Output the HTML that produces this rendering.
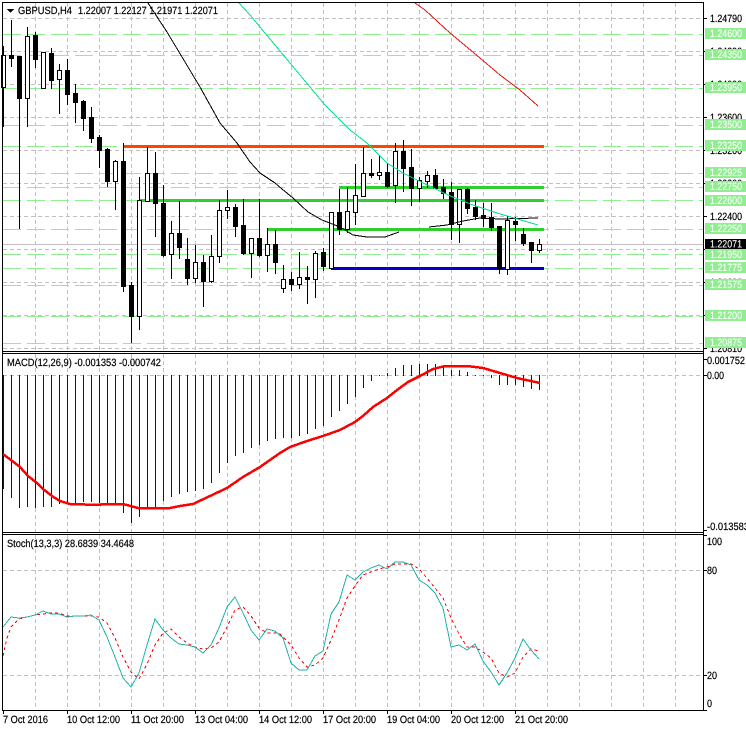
<!DOCTYPE html>
<html><head><meta charset="utf-8"><title>GBPUSD,H4</title>
<style>
html,body{margin:0;padding:0;background:#fff;width:746px;height:731px;overflow:hidden}
svg{display:block}
text{font-family:"Liberation Sans",sans-serif;font-size:10.5px;fill:#000;stroke:#000;stroke-width:.2px}
text.w{fill:#fff;stroke:#fff;stroke-width:.1px}
</style></head><body>
<svg width="746" height="731" viewBox="0 0 746 731" xmlns="http://www.w3.org/2000/svg" shape-rendering="crispEdges">
<rect width="746" height="731" fill="#fff"/>
<!-- vertical grid -->
<path fill="none" stroke="#c0c0c0" stroke-dasharray="4 3" d="M35.5 3V351M67.5 3V351M99.5 3V351M131.5 3V351M163.5 3V351M195.5 3V351M227.5 3V351M259.5 3V351M291.5 3V351M323.5 3V351M355.5 3V351M387.5 3V351M419.5 3V351M451.5 3V351M483.5 3V351M515.5 3V351M547.5 3V351M579.5 3V351M611.5 3V351M643.5 3V351M675.5 3V351M35.5 354V532M67.5 354V532M99.5 354V532M131.5 354V532M163.5 354V532M195.5 354V532M227.5 354V532M259.5 354V532M291.5 354V532M323.5 354V532M355.5 354V532M387.5 354V532M419.5 354V532M451.5 354V532M483.5 354V532M515.5 354V532M547.5 354V532M579.5 354V532M611.5 354V532M643.5 354V532M675.5 354V532M35.5 535V710M67.5 535V710M99.5 535V710M131.5 535V710M163.5 535V710M195.5 535V710M227.5 535V710M259.5 535V710M291.5 535V710M323.5 535V710M355.5 535V710M387.5 535V710M419.5 535V710M451.5 535V710M483.5 535V710M515.5 535V710M547.5 535V710M579.5 535V710M611.5 535V710M643.5 535V710M675.5 535V710"/>
<!-- horizontal grid -->
<path fill="none" stroke="#c0c0c0" stroke-dasharray="4 3" d="M3 18.5H703M3 51.5H703M3 84.5H703M3 117.5H703M3 150.5H703M3 183.5H703M3 216.5H703M3 249.5H703M3 282.5H703M3 315.5H703M3 348.5H703M3 375.5H703M3 570.5H703M3 675.5H703"/>
<!-- green dashed levels -->
<path fill="none" stroke="#90ee90" stroke-dasharray="18 6" d="M3 34.5H703M3 55.5H703M3 88.5H703M3 125.5H703M3 146.5H703M3 173.5H703M3 187.5H703M3 200.5H703M3 229.5H703M3 254.5H703M3 268.5H703M3 285.5H703M3 316.5H703M3 343.5H703"/>
<!-- current price -->
<rect x="3" y="244" width="700" height="1" fill="#c0c0c0"/>
<!-- thick levels -->
<rect x="123" y="145" width="421" height="3" fill="#ff4500"/>
<rect x="339" y="186" width="205" height="3" fill="#32cd32"/>
<rect x="139" y="199" width="405" height="3" fill="#32cd32"/>
<rect x="267" y="228" width="277" height="3" fill="#32cd32"/>
<rect x="331" y="267" width="213" height="3" fill="#0000cd"/>
<!-- wicks -->
<path fill="none" stroke="#000" d="M3.5 46V127M11.5 20V67M19.5 56V229M27.5 27V127M35.5 32V68M43.5 52V88M51.5 48V89M59.5 64V114M67.5 59V105M75.5 84V123M83.5 100V131M91.5 107V143M99.5 135V168M107.5 148V187M115.5 160V210M123.5 143V292M131.5 282V343M139.5 177V330M147.5 147V202M155.5 152V237M163.5 185V257M171.5 221V279M179.5 201V259M187.5 238V285M195.5 245V283M203.5 255V307M211.5 235V283M219.5 200V263M227.5 190V219M235.5 204V237M243.5 199V255M251.5 238V278M259.5 199V257M267.5 228V272M275.5 230V274M283.5 265V293M291.5 272V291M299.5 252V289M307.5 266V304M315.5 251V298M323.5 248V271M331.5 212V268M339.5 189V235M347.5 187V233M355.5 164V225M363.5 147V197M371.5 159V178M379.5 155V180M387.5 163V188M395.5 143V203M403.5 140V192M411.5 149V206M419.5 177V202M427.5 171V188M435.5 169V188M443.5 179V199M451.5 182V240M459.5 189V243M467.5 188V214M475.5 200V220M483.5 203V227M491.5 203V231M499.5 226V274M507.5 216V275M515.5 217V241M523.5 228V246M531.5 242V263M539.5 239V253"/>
<!-- black bodies -->
<path fill="#000" d="M9 55h5v4h-5zM17 56h5v43h-5zM33 35h5v25h-5zM49 53h5v28h-5zM65 70h5v25h-5zM73 93h5v10h-5zM81 101h5v18h-5zM89 117h5v22h-5zM97 137h5v14h-5zM105 149h5v33h-5zM121 161h5v126h-5zM129 285h5v32h-5zM153 173h5v31h-5zM161 203h5v53h-5zM177 233h5v15h-5zM185 259h5v20h-5zM201 262h5v20h-5zM233 207h5v20h-5zM241 225h5v29h-5zM257 238h5v18h-5zM273 244h5v19h-5zM289 279h5v6h-5zM305 277h5v3h-5zM321 252h5v15h-5zM337 212h5v18h-5zM369 173h5v3h-5zM385 172h5v15h-5zM401 151h5v18h-5zM409 167h5v22h-5zM433 175h5v14h-5zM441 187h5v7h-5zM449 192h5v33h-5zM465 189h5v20h-5zM473 207h5v10h-5zM481 215h5v4h-5zM489 217h5v11h-5zM497 226h5v43h-5zM513 221h5v4h-5zM521 234h5v10h-5zM529 242h5v9h-5z"/>
<!-- white bodies -->
<path fill="#fff" stroke="#000" d="M1.5 55.5h4v32h-4zM25.5 36.5h4v62h-4zM41.5 52.5h4v36h-4zM57.5 70.5h4v9h-4zM113.5 161.5h4v20h-4zM137.5 200.5h4v116h-4zM145.5 173.5h4v28h-4zM169.5 233.5h4v21h-4zM193.5 262.5h4v16h-4zM209.5 256.5h4v25h-4zM217.5 210.5h4v46h-4zM225.5 207.5h4v3h-4zM249.5 238.5h4v15h-4zM265.5 244.5h4v11h-4zM281.5 279.5h4v9h-4zM297.5 277.5h4v7h-4zM313.5 253.5h4v26h-4zM329.5 212.5h4v56h-4zM345.5 211.5h4v18h-4zM353.5 195.5h4v17h-4zM361.5 173.5h4v23h-4zM377.5 172.5h4v3h-4zM393.5 151.5h4v34h-4zM417.5 180.5h4v8h-4zM425.5 175.5h4v6h-4zM457.5 189.5h4v35h-4zM505.5 220.5h4v49h-4zM537.5 244.5h4v6h-4z"/>
<!-- moving averages -->
<polyline fill="none" stroke="#000" points="148,3 167,32 182,57 200,87 220,123 237,143 250,162 260,173 275,183 282,189 293,198 308,212 322,220 340,227 353,235 367,237 385,237 399,232"/>
<polyline fill="none" stroke="#000" points="429,227 447,225 463,221 480,218 500,219 538,218"/>
<polyline fill="none" stroke="#00e08a" points="239,3 250,15 275,45 300,75 325,105 350,130 367,143 387,163 403,173 423,183 448,195 473,205 497,213 538,225"/>
<polyline fill="none" stroke="#f01010" points="415,3 425,10 450,33 480,58 500,75 520,90 538,106"/>
<!-- MACD bars -->
<path fill="none" stroke="#0000cd" d="M3.5 375V489M11.5 375V498M19.5 375V508M27.5 375V507M35.5 375V508M43.5 375V507M51.5 375V507M59.5 375V504M67.5 375V503M75.5 375V503M83.5 375V502M91.5 375V502M99.5 375V503M107.5 375V503M115.5 375V503M123.5 375V513M131.5 375V523M139.5 375V517M147.5 375V508M155.5 375V507M163.5 375V501M171.5 375V497M179.5 375V494M187.5 375V492M195.5 375V491M203.5 375V489M211.5 375V483M219.5 375V473M227.5 375V463M235.5 375V456M243.5 375V453M251.5 375V448M259.5 375V445M267.5 375V441M275.5 375V439M283.5 375V438M291.5 375V438M299.5 375V436M307.5 375V434M315.5 375V429M323.5 375V426M331.5 375V417M339.5 375V411M347.5 375V404M355.5 375V397M363.5 375V388M371.5 375V381M379.5 375V376M387.5 373V376M395.5 368V376M403.5 365V376M411.5 365V376M419.5 364V376M427.5 364V376M435.5 364V376M443.5 367V376M451.5 370V376M459.5 370V376M467.5 372V376M475.5 375V376M483.5 375V376M491.5 375V378M499.5 375V385M507.5 375V385M515.5 375V385M523.5 375V387M531.5 375V389M539.5 375V390"/>
<polyline fill="none" stroke="#ff0000" stroke-width="2.5" points="3,454 11,460 20,467 28,476 37,483 43,489 52,496 60,501 70,504 100,505 102,504 123,504 138,508 170,508 180,506 193,504 210,496 227,488 243,477 260,467 280,453 290,447 307,441 323,436 340,430 355,422 363,416 373,407 387,398 397,390 408,382 420,376 433,369 445,366 467,366 483,368 500,373 517,378 540,383"/>
<!-- Stochastic -->
<polyline fill="none" stroke="#ff0000" stroke-dasharray="3 3" points="3,656 7,638 11,627 19,619 27,617 35,615 43,614 51,613 59,613 67,616 75,616 83,616 91,616 99,617 107,623 115,638 123,657 131,672 139,679 147,664 155,645 163,633 171,629 179,637 187,643 195,647 203,649 211,648 219,642 227,627 235,610 243,607 251,616 259,628 267,633 275,633 280,634 291,645 299,658 307,667 315,665 323,658 331,640 339,620 347,598 355,586 363,575 371,572 379,569 387,567 395,564 403,564 411,564 419,569 427,578 435,588 443,598 451,618 459,634 467,647 475,647 483,652 491,658 499,673 507,677 515,673 523,657 531,649 539,651"/>
<polyline fill="none" stroke="#20b2aa" points="3,627 11,617 19,618 27,617 35,615 43,611 51,614 59,614 67,617 75,616 83,616 91,615 99,620 107,637 115,657 123,678 131,687 139,673 147,645 155,619 163,630 171,638 179,644 187,645 195,647 203,653 211,645 219,628 227,607 235,597 243,613 251,630 259,640 267,629 275,631 283,638 291,663 299,670 307,670 315,656 323,651 331,614 339,602 347,575 355,580 363,572 371,568 379,565 387,569 395,562 403,562 411,565 419,580 427,585 435,593 443,608 451,647 459,645 467,650 475,644 483,661 491,672 499,685 507,673 515,658 523,639 531,650 539,659"/>
<!-- frames -->
<rect x="2" y="2" width="702" height="1" fill="#000"/>
<rect x="2" y="351" width="702" height="1" fill="#000"/>
<rect x="2" y="353" width="702" height="1" fill="#000"/>
<rect x="2" y="532" width="702" height="1" fill="#000"/>
<rect x="2" y="534" width="702" height="1" fill="#000"/>
<rect x="2" y="710" width="702" height="1" fill="#000"/>
<rect x="2" y="2" width="1" height="709" fill="#000"/>
<rect x="703" y="2" width="1" height="709" fill="#000"/>
<!-- ticks -->
<path fill="none" stroke="#000" d="M704 18.5h3M704 51.5h3M704 84.5h3M704 117.5h3M704 150.5h3M704 183.5h3M704 216.5h3M704 249.5h3M704 282.5h3M704 315.5h3M704 348.5h3M704 359.5h3M704 375.5h3M704 530.5h3M704 535.5h3M704 570.5h3M704 675.5h3M704 710.5h3M3.5 711v3M67.5 711v3M131.5 711v3M195.5 711v3M259.5 711v3M323.5 711v3M387.5 711v3M451.5 711v3M515.5 711v3"/>
<!-- dropdown triangle -->
<path fill="#000" d="M7 9h7l-3.500 4z"/>
<g text-rendering="geometricPrecision" shape-rendering="auto">
<text x="18" y="14" textLength="54" lengthAdjust="spacingAndGlyphs">GBPUSD,H4</text>
<text x="78" y="14" textLength="140" lengthAdjust="spacingAndGlyphs">1.22007 1.22127 1.21971 1.22071</text>
<text x="7" y="366" textLength="154" lengthAdjust="spacingAndGlyphs">MACD(12,26,9) -0.001353 -0.000742</text>
<text x="7" y="547" textLength="127" lengthAdjust="spacingAndGlyphs">Stoch(13,3,3) 28.6839 34.4648</text>
<!-- price scale -->
<text x="710" y="22" textLength="32" lengthAdjust="spacingAndGlyphs">1.24790</text>
<text x="710" y="55" textLength="32" lengthAdjust="spacingAndGlyphs">1.24390</text>
<text x="710" y="88" textLength="32" lengthAdjust="spacingAndGlyphs">1.24000</text>
<text x="710" y="121" textLength="32" lengthAdjust="spacingAndGlyphs">1.23600</text>
<text x="710" y="154" textLength="32" lengthAdjust="spacingAndGlyphs">1.23200</text>
<text x="710" y="187" textLength="32" lengthAdjust="spacingAndGlyphs">1.22800</text>
<text x="710" y="220" textLength="32" lengthAdjust="spacingAndGlyphs">1.22400</text>
<text x="710" y="286" textLength="32" lengthAdjust="spacingAndGlyphs">1.21600</text>
<text x="710" y="352" textLength="32" lengthAdjust="spacingAndGlyphs">1.20810</text>
</g>
<!-- label backgrounds -->
<path fill="#90ee90" d="M705 28h41v11h-41zM705 49h41v11h-41zM705 82h41v11h-41zM705 119h41v11h-41zM705 140h41v11h-41zM705 167h41v11h-41zM705 181h41v11h-41zM705 195h41v11h-41zM705 223h41v11h-41zM705 249h41v11h-41zM705 262h41v11h-41zM705 279h41v11h-41zM705 310h41v11h-41zM705 337h41v11h-41z"/>
<rect x="705" y="239" width="41" height="10" fill="#000"/>
<g text-rendering="geometricPrecision" shape-rendering="auto">
<text class="w" x="710" y="37" textLength="32" lengthAdjust="spacingAndGlyphs">1.24600</text>
<text class="w" x="710" y="58" textLength="32" lengthAdjust="spacingAndGlyphs">1.24350</text>
<text class="w" x="710" y="91" textLength="32" lengthAdjust="spacingAndGlyphs">1.23950</text>
<text class="w" x="710" y="128" textLength="32" lengthAdjust="spacingAndGlyphs">1.23500</text>
<text class="w" x="710" y="149" textLength="32" lengthAdjust="spacingAndGlyphs">1.23250</text>
<text class="w" x="710" y="176" textLength="32" lengthAdjust="spacingAndGlyphs">1.22925</text>
<text class="w" x="710" y="190" textLength="32" lengthAdjust="spacingAndGlyphs">1.22750</text>
<text class="w" x="710" y="204" textLength="32" lengthAdjust="spacingAndGlyphs">1.22600</text>
<text class="w" x="710" y="232" textLength="32" lengthAdjust="spacingAndGlyphs">1.22250</text>
<text class="w" x="710" y="247.500" textLength="32" lengthAdjust="spacingAndGlyphs">1.22071</text>
<text class="w" x="710" y="258" textLength="32" lengthAdjust="spacingAndGlyphs">1.21950</text>
<text class="w" x="710" y="271" textLength="32" lengthAdjust="spacingAndGlyphs">1.21775</text>
<text class="w" x="710" y="288" textLength="32" lengthAdjust="spacingAndGlyphs">1.21575</text>
<text class="w" x="710" y="319" textLength="32" lengthAdjust="spacingAndGlyphs">1.21200</text>
<text class="w" x="710" y="346" textLength="32" lengthAdjust="spacingAndGlyphs">1.20875</text>
<!-- indicator scales -->
<text x="707" y="364" textLength="38" lengthAdjust="spacingAndGlyphs">0.001752</text>
<text x="707" y="379" textLength="17" lengthAdjust="spacingAndGlyphs">0.00</text>
<text x="707" y="530" textLength="42" lengthAdjust="spacingAndGlyphs">-0.013583</text>
<text x="707" y="545" textLength="15" lengthAdjust="spacingAndGlyphs">100</text>
<text x="707" y="574" textLength="10" lengthAdjust="spacingAndGlyphs">80</text>
<text x="707" y="679" textLength="10" lengthAdjust="spacingAndGlyphs">20</text>
<text x="707" y="707" textLength="5" lengthAdjust="spacingAndGlyphs">0</text>
<!-- time scale -->
<text x="3" y="723" textLength="45" lengthAdjust="spacingAndGlyphs">7 Oct 2016</text>
<text x="67" y="723" textLength="53" lengthAdjust="spacingAndGlyphs">10 Oct 12:00</text>
<text x="131" y="723" textLength="53" lengthAdjust="spacingAndGlyphs">11 Oct 20:00</text>
<text x="195" y="723" textLength="53" lengthAdjust="spacingAndGlyphs">13 Oct 04:00</text>
<text x="259" y="723" textLength="53" lengthAdjust="spacingAndGlyphs">14 Oct 12:00</text>
<text x="323" y="723" textLength="53" lengthAdjust="spacingAndGlyphs">17 Oct 20:00</text>
<text x="387" y="723" textLength="53" lengthAdjust="spacingAndGlyphs">19 Oct 04:00</text>
<text x="451" y="723" textLength="53" lengthAdjust="spacingAndGlyphs">20 Oct 12:00</text>
<text x="515" y="723" textLength="53" lengthAdjust="spacingAndGlyphs">21 Oct 20:00</text>
</g>
</svg>
</body></html>
